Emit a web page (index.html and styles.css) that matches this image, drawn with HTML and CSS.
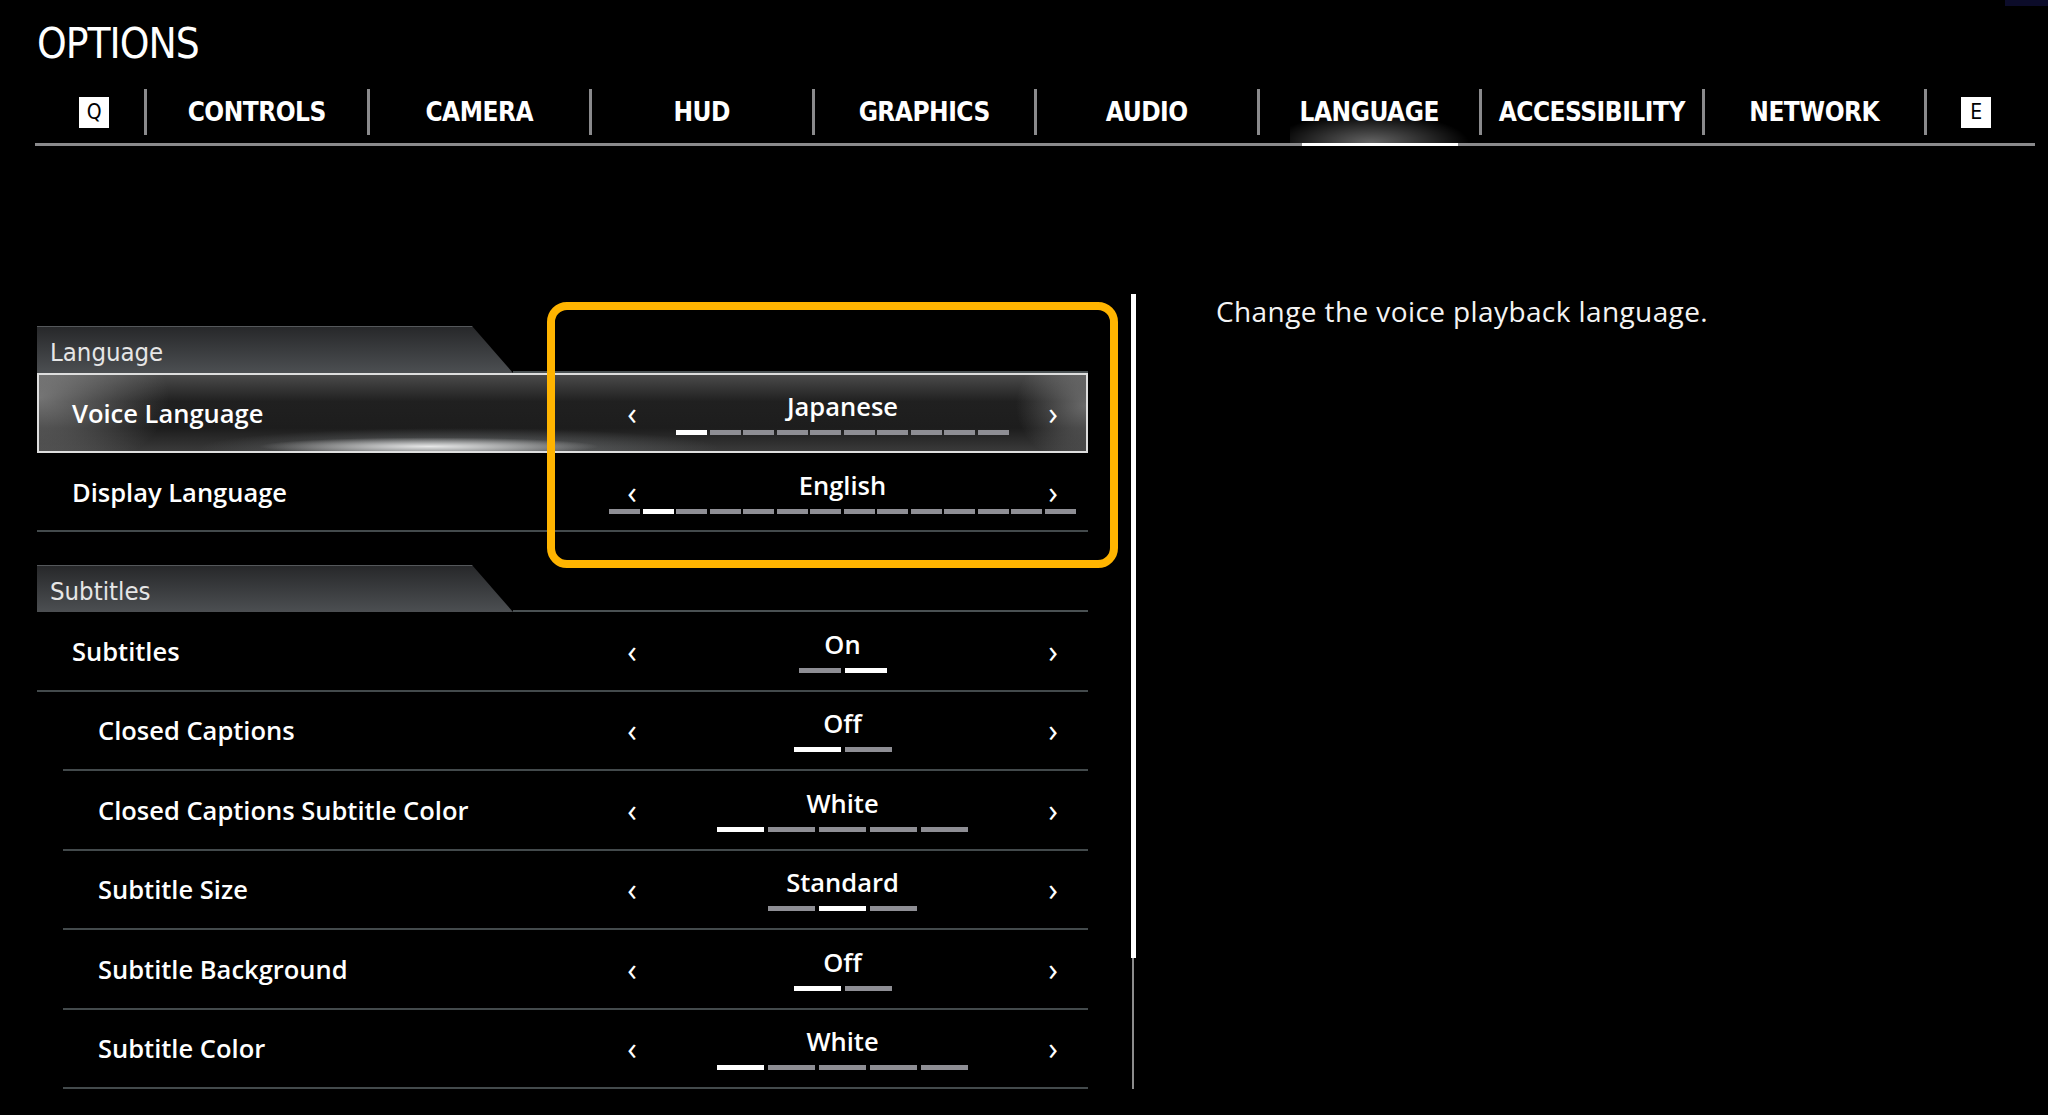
FILE: index.html
```html
<!DOCTYPE html>
<html lang="en">
<head>
    <meta charset="UTF-8">
    <meta name="viewport" content="width=device-width, initial-scale=1.0">
    <title>Options - Language</title>
    <link rel="stylesheet" href="styles.css">
</head>
<body>

    <div class="corner"></div>

    <header class="top">
        <h1 class="title">OPTIONS</h1>
        <nav class="tabs">
            <div class="tab tab-first"><span class="key">Q</span></div>
            <div class="tab">CONTROLS</div>
            <div class="tab">CAMERA</div>
            <div class="tab">HUD</div>
            <div class="tab">GRAPHICS</div>
            <div class="tab">AUDIO</div>
            <div class="tab active">LANGUAGE</div>
            <div class="tab">ACCESSIBILITY</div>
            <div class="tab">NETWORK</div>
            <div class="tab tab-last"><span class="key">E</span></div>
        </nav>
    </header>

    <main class="content">
        <section class="settings">
            <div class="highlight"></div>

            <div class="group">
                <div class="section-head">
                    <div class="section-tab">Language</div>
                    <div class="section-fill"></div>
                </div>

                <div class="row selected">
                    <div class="label">Voice Language</div>
                    <div class="control">
                        <span class="arrow">&lsaquo;</span>
                        <div class="value">
                            <div class="value-text">Japanese</div>
                            <div class="pips dense">
                                <i class="pip on"></i><i class="pip"></i><i class="pip"></i><i class="pip"></i><i class="pip"></i>
                                <i class="pip"></i><i class="pip"></i><i class="pip"></i><i class="pip"></i><i class="pip"></i>
                            </div>
                        </div>
                        <span class="arrow">&rsaquo;</span>
                    </div>
                </div>

                <div class="row row-last">
                    <div class="label">Display Language</div>
                    <div class="control">
                        <span class="arrow">&lsaquo;</span>
                        <div class="value">
                            <div class="value-text">English</div>
                            <div class="pips dense">
                                <i class="pip"></i><i class="pip on"></i><i class="pip"></i><i class="pip"></i><i class="pip"></i>
                                <i class="pip"></i><i class="pip"></i><i class="pip"></i><i class="pip"></i><i class="pip"></i>
                                <i class="pip"></i><i class="pip"></i><i class="pip"></i><i class="pip"></i>
                            </div>
                        </div>
                        <span class="arrow">&rsaquo;</span>
                    </div>
                </div>
            </div>

            <div class="group">
                <div class="section-head">
                    <div class="section-tab">Subtitles</div>
                    <div class="section-fill"></div>
                </div>

                <div class="row">
                    <div class="label">Subtitles</div>
                    <div class="control">
                        <span class="arrow">&lsaquo;</span>
                        <div class="value">
                            <div class="value-text">On</div>
                            <div class="pips narrow"><i class="pip"></i><i class="pip on"></i></div>
                        </div>
                        <span class="arrow">&rsaquo;</span>
                    </div>
                </div>

                <div class="row indent">
                    <div class="label">Closed Captions</div>
                    <div class="control">
                        <span class="arrow">&lsaquo;</span>
                        <div class="value">
                            <div class="value-text">Off</div>
                            <div class="pips"><i class="pip on"></i><i class="pip"></i></div>
                        </div>
                        <span class="arrow">&rsaquo;</span>
                    </div>
                </div>

                <div class="row indent">
                    <div class="label">Closed Captions Subtitle Color</div>
                    <div class="control">
                        <span class="arrow">&lsaquo;</span>
                        <div class="value">
                            <div class="value-text">White</div>
                            <div class="pips"><i class="pip on"></i><i class="pip"></i><i class="pip"></i><i class="pip"></i><i class="pip"></i></div>
                        </div>
                        <span class="arrow">&rsaquo;</span>
                    </div>
                </div>

                <div class="row indent">
                    <div class="label">Subtitle Size</div>
                    <div class="control">
                        <span class="arrow">&lsaquo;</span>
                        <div class="value">
                            <div class="value-text">Standard</div>
                            <div class="pips"><i class="pip"></i><i class="pip on"></i><i class="pip"></i></div>
                        </div>
                        <span class="arrow">&rsaquo;</span>
                    </div>
                </div>

                <div class="row indent">
                    <div class="label">Subtitle Background</div>
                    <div class="control">
                        <span class="arrow">&lsaquo;</span>
                        <div class="value">
                            <div class="value-text">Off</div>
                            <div class="pips"><i class="pip on"></i><i class="pip"></i></div>
                        </div>
                        <span class="arrow">&rsaquo;</span>
                    </div>
                </div>

                <div class="row indent">
                    <div class="label">Subtitle Color</div>
                    <div class="control">
                        <span class="arrow">&lsaquo;</span>
                        <div class="value">
                            <div class="value-text">White</div>
                            <div class="pips"><i class="pip on"></i><i class="pip"></i><i class="pip"></i><i class="pip"></i><i class="pip"></i></div>
                        </div>
                        <span class="arrow">&rsaquo;</span>
                    </div>
                </div>
            </div>
        </section>

        <div class="scrollbar"><div class="thumb"></div></div>

        <p class="desc">Change the voice playback language.</p>
    </main>

</body>
</html>
```

FILE: styles.css
```css
body {
    margin: 0;
    width: 2048px;
    height: 1115px;
    overflow: hidden;
    position: relative;
    background-color: #000;
    color: #fff;
    font-family: "Open Sans", "Noto Sans", sans-serif;
}
.corner {
    position: absolute;
    top: 0;
    right: 0;
    width: 43px;
    height: 6px;
    background-color: #0c0c2a;
}

/* header + tabs */
.top {
    padding: 23px 13px 0 35px;
}
.title {
    margin: 0;
    font-family: "DejaVu Sans Condensed", "DejaVu Sans", sans-serif;
    font-stretch: condensed;
    font-weight: normal;
    font-size: 42px;
    line-height: 42px;
    letter-spacing: -1px;
    padding-left: 2px;
}
.tabs {
    display: flex;
    margin-top: 24px;
    padding-bottom: 8px;
    border-bottom: 3px solid #8a8a8c;
}
.tab {
    position: relative;
    flex: none;
    width: 222.5px;
    height: 46px;
    box-sizing: border-box;
    border-left: 3px solid #8a8a8c;
    display: flex;
    align-items: center;
    justify-content: center;
    font-family: "DejaVu Sans Condensed", "DejaVu Sans", sans-serif;
    font-stretch: condensed;
    font-weight: bold;
    font-size: 26px;
    letter-spacing: -0.5px;
}
.tab-first {
    width: 109px;
    border-left: none;
    padding-left: 9px;
}
.tab-last {
    flex: 1;
    padding-right: 10px;
}
.key {
    width: 30px;
    height: 31px;
    background: #fff;
    color: #000;
    font-weight: normal;
    font-size: 21px;
    line-height: 31px;
    text-align: center;
}
.tab.active::before {
    content: "";
    position: absolute;
    left: 30px;
    bottom: -8px;
    width: 180px;
    height: 30px;
    background: radial-gradient(ellipse at 45% 100%, rgba(255, 255, 255, 0.4), rgba(255, 255, 255, 0) 70%);
}
.tab.active::after {
    content: "";
    position: absolute;
    left: 42px;
    bottom: -11px;
    width: 156px;
    height: 3px;
    background: #fff;
}

/* main area */
.content {
    display: flex;
    margin-top: 148px;
    padding-left: 37px;
}
.settings {
    position: relative;
    width: 1051px;
    padding-top: 32px;
}
.group + .group {
    margin-top: 33px;
}
.section-head {
    display: flex;
    height: 47px;
}
.section-tab {
    width: 476px;
    box-sizing: border-box;
    padding: 4px 0 0 13px;
    line-height: 43px;
    clip-path: polygon(0 0, 435px 0, 100% 100%, 0 100%);
    background: linear-gradient(#27282a, #4c4f52);
    border-top: 1px solid #55585b;
    font-family: "DejaVu Sans Condensed", "DejaVu Sans", sans-serif;
    font-stretch: condensed;
    font-size: 25.5px;
    color: #e6e6e6;
}
.section-fill {
    flex: 1;
    border-bottom: 2px solid #4a5153;
}

.row {
    display: flex;
    align-items: center;
    height: 79.5px;
    box-sizing: border-box;
    border-bottom: 2px solid #434a4c;
}
.row.indent {
    margin-left: 26px;
}
.row.selected {
    height: 80px;
    border: 2px solid #dedede;
    background:
        radial-gradient(ellipse 170px 9px at 390px 94%, rgba(255, 255, 255, 0.85), rgba(255, 255, 255, 0)),
        radial-gradient(ellipse 260px 20px at 420px 96%, rgba(190, 200, 205, 0.35), rgba(190, 200, 205, 0)),
        radial-gradient(ellipse 130px 80px at 0 30%, rgba(170, 170, 170, 0.6), rgba(170, 170, 170, 0)),
        radial-gradient(ellipse 70px 60px at 100% 40%, rgba(180, 180, 180, 0.5), rgba(180, 180, 180, 0)),
        linear-gradient(#4a4a4a, #202020 35%, #1d1d1d 70%, #3a3a3a);
}
.row.selected .label {
    padding-left: 33px;
}
.row.row-last {
    height: 79px;
}
.label {
    flex: 1;
    padding-left: 35px;
    font-size: 25.5px;
    font-weight: 600;
}
.control {
    width: 446px;
    margin-right: 22px;
    box-sizing: border-box;
    padding: 0 8px 0 7px;
    display: flex;
    align-items: center;
}
.row.selected .control {
    margin-right: 20px;
}
.arrow {
    width: 10px;
    font-size: 32px;
    line-height: 32px;
    font-weight: 500;
    text-align: center;
}
.value {
    flex: 1;
    min-width: 0;
    display: flex;
    flex-direction: column;
    align-items: center;
}
.value-text {
    font-size: 25.5px;
    font-weight: 600;
    line-height: 30px;
}
.pips {
    display: flex;
    flex: none;
    gap: 4px;
    margin-top: 9px;
}
.pip {
    flex: none;
    width: 47px;
    height: 5px;
    background-color: #8e8e94;
}
.pip.on {
    background-color: #fff;
}
.pips.dense {
    gap: 2.5px;
}
.pips.dense .pip {
    width: 31px;
}
.pips.narrow .pip {
    width: 42px;
}

.highlight {
    position: absolute;
    left: 510px;
    top: 8px;
    width: 571px;
    height: 266px;
    box-sizing: border-box;
    border: 8px solid #ffb400;
    border-radius: 20px;
    z-index: 2;
}

.scrollbar {
    width: 5px;
    height: 795px;
    margin-left: 43px;
    background: linear-gradient(to right, transparent 1px, #8c8c8c 1px, #8c8c8c 3px, transparent 3px);
}
.thumb {
    height: 664px;
    background-color: #fff;
}

.desc {
    margin: 0 0 0 80px;
    font-size: 28px;
    font-weight: 500;
    letter-spacing: 0.4px;
    line-height: 34px;
    color: #f4f4f4;
}
```
